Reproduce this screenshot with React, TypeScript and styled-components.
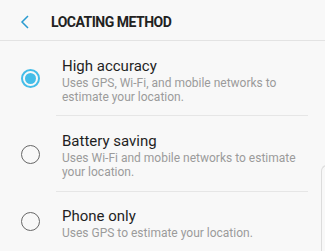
import styled, { createGlobalStyle } from 'styled-components';

const GlobalStyle = createGlobalStyle`
  html, body {
    margin: 0;
    padding: 0;
    background: #f8f8f8;
  }
  body {
    font-family: Roboto, "Noto Sans", Arial, sans-serif;
    overflow: hidden;
  }
`;

const Screen = styled.div`
  position: relative;
  width: 325px;
  height: 251px;
  background: #f8f8f8;
  overflow: hidden;
`;

const Header = styled.header`
  display: flex;
  align-items: center;
  box-sizing: border-box;
  height: 41px;
  padding-top: 4px;
  border-bottom: 1px solid #e3e3e3;
`;

const BackButton = styled.button`
  display: flex;
  align-items: center;
  justify-content: center;
  width: 50px;
  height: 30px;
  padding: 0;
  border: none;
  background: none;
  color: #2a9bd0;
`;

const Title = styled.h1`
  margin: 0 0 0 1px;
  font-size: 14px;
  font-weight: 700;
  color: #222;
  letter-spacing: -0.5px;
`;

const List = styled.ul`
  list-style: none;
  margin: 0;
  padding: 0;
`;

const Row = styled.li`
  display: flex;
  align-items: center;
`;

const RadioCell = styled.div`
  display: flex;
  width: 56px;
  padding-left: 21px;
  box-sizing: border-box;
`;

const Radio = styled.span<{ $checked?: boolean }>`
  display: flex;
  align-items: center;
  justify-content: center;
  width: 19px;
  height: 19px;
  box-sizing: border-box;
  border-radius: 50%;
  border: ${(p) => (p.$checked ? '2px solid #44bde8' : '1.4px solid #676767')};
  &::after {
    content: '';
    display: ${(p) => (p.$checked ? 'block' : 'none')};
    width: 11px;
    height: 11px;
    border-radius: 50%;
    background: #44bde8;
  }
`;

const Body = styled.div<{ $last?: boolean }>`
  flex: 1;
  margin-right: 17px;
  padding: 14.5px 0 11.5px 6px;
  border-bottom: ${(p) => (p.$last ? 'none' : '1px solid #e6e6e6')};
`;

const OptionTitle = styled.div`
  font-size: 15px;
  line-height: 20px;
  color: #1f1f1f;
`;

const OptionText = styled.div`
  font-size: 12px;
  line-height: 14.2px;
  color: #9b9b9b;
`;

const EdgeHandle = styled.div`
  position: absolute;
  left: 321px;
  top: 165px;
  width: 10px;
  height: 100px;
  border-left: 1px solid #dcdcdc;
  border-top: 1px solid #dcdcdc;
  border-top-left-radius: 6px;
`;

const options = [
  {
    title: 'High accuracy',
    text: 'Uses GPS, Wi-Fi, and mobile networks to estimate your location.',
    checked: true,
  },
  {
    title: 'Battery saving',
    text: 'Uses Wi-Fi and mobile networks to estimate your location.',
    checked: false,
  },
  {
    title: 'Phone only',
    text: 'Uses GPS to estimate your location.',
    checked: false,
  },
];

export default function App() {
  return (
    <Screen>
      <GlobalStyle />
      <Header>
        <BackButton aria-label="Back">
          <svg width="10" height="14" viewBox="0 0 10 14" fill="none">
            <path d="M8 1 L2 7 L8 13" stroke="currentColor" strokeWidth="1.5" />
          </svg>
        </BackButton>
        <Title>LOCATING METHOD</Title>
      </Header>
      <List>
        {options.map((o, i) => (
          <Row key={o.title}>
            <RadioCell>
              <Radio $checked={o.checked} />
            </RadioCell>
            <Body $last={i === options.length - 1}>
              <OptionTitle>{o.title}</OptionTitle>
              <OptionText>{o.text}</OptionText>
            </Body>
          </Row>
        ))}
      </List>
      <EdgeHandle />
    </Screen>
  );
}
